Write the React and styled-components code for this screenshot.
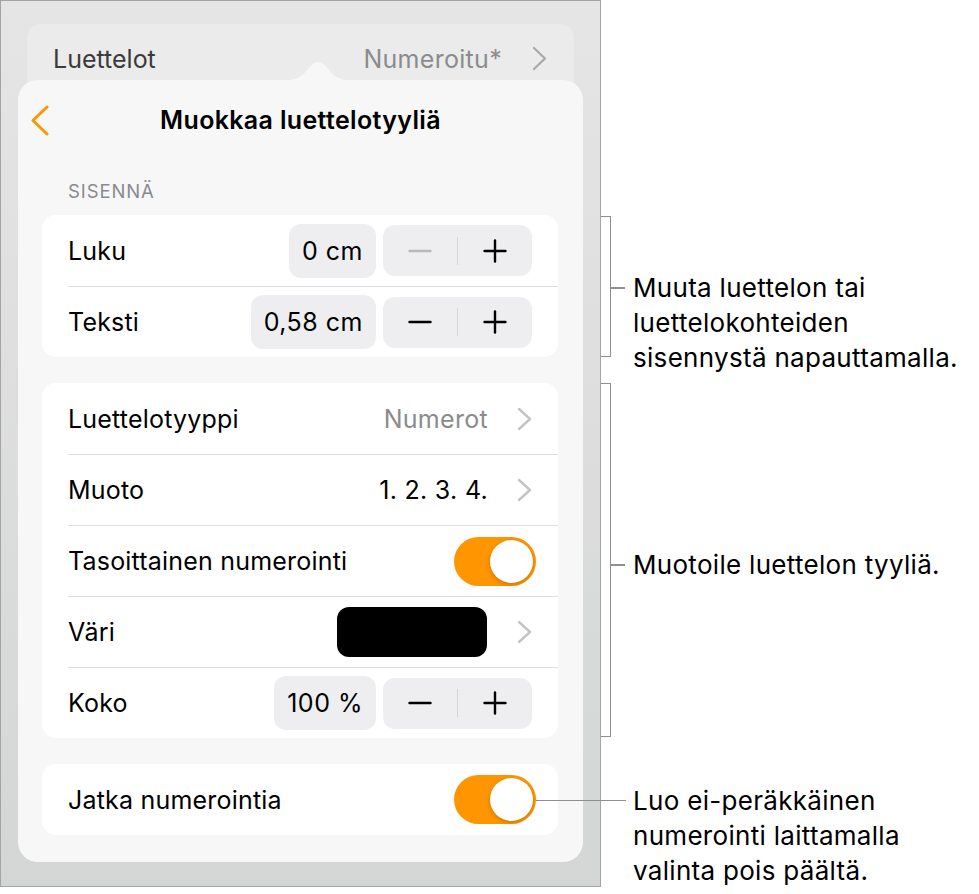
import React from "react";
import styled, { createGlobalStyle } from "styled-components";

const Global = createGlobalStyle`
  html, body { margin: 0; padding: 0; background: #fff; }
  body { font-family: Inter, "Noto Sans", sans-serif; color: #000; }
`;

const Page = styled.div`
  display: flex;
  align-items: flex-start;
  width: 979px;
  height: 894px;
`;

const Frame = styled.div`
  width: 601px;
  height: 887px;
  box-sizing: border-box;
  border: 1px solid #a4a4a4;
  background: linear-gradient(#e4e5e4, #d4d6d5);
  padding: 23px 17px 24px;
  display: flex;
  flex-direction: column;
`;

const TopCard = styled.div`
  margin: 0 9px;
  height: 72px;
  flex-shrink: 0;
  box-sizing: border-box;
  border-radius: 14px;
  background: #eaebea;
  padding: 0 27px 0 26px;
`;

const TopRow = styled.div`
  height: 69px;
  display: flex;
  align-items: center;
  font-size: 25px;
  color: #3a3a3a;
`;

const Spacer = styled.div`
  flex: 1;
`;

const Muted = styled.span`
  color: ${(p) => (p.$dark ? "#000" : "#8b8b8e")};
  font-size: 25px;
  letter-spacing: 0.3px;
  margin-right: ${(p) => p.$gap || 0}px;
`;

const Popover = styled.div`
  position: relative;
  margin-top: -16px;
  flex: 1;
  box-sizing: border-box;
  background: #f7f7f7;
  border-radius: 20px;
  padding: 0 25px 0 24px;
  display: flex;
  flex-direction: column;
`;

const Arrow = styled.svg`
  position: absolute;
  left: 260px;
  top: -21px;
`;

const Header = styled.div`
  margin: 0 -25px 0 -24px;
  height: 80px;
  display: grid;
  grid-template-columns: 1fr auto 1fr;
  align-items: center;
`;

const BackBtn = styled.div`
  padding-left: 13px;
  display: flex;
  align-items: center;
`;

const Title = styled.div`
  font-size: 25px;
  font-weight: 600;
  letter-spacing: 0.35px;
`;

const SectionLabel = styled.div`
  margin: 20px 0 13px 26px;
  line-height: 22px;
  font-size: 18.5px;
  color: #8a8a8e;
  letter-spacing: 0.9px;
`;

const Card = styled.div`
  background: #fff;
  border-radius: 14px;
  margin-bottom: ${(p) => p.$mb || 0}px;
  overflow: hidden;
`;

const Row = styled.div`
  height: 71px;
  box-sizing: border-box;
  margin-left: 26px;
  padding-right: 26px;
  display: flex;
  align-items: center;
  font-size: 25px;
  letter-spacing: 0.2px;
  & + & {
    border-top: 1px solid #dedee0;
  }
`;

const ValueBox = styled.div`
  height: 54px;
  box-sizing: border-box;
  padding: 0 13px;
  border-radius: 12px;
  background: #eeeef0;
  display: flex;
  align-items: center;
  font-size: 25px;
  letter-spacing: 0.5px;
  margin-right: 7px;
`;

const Stepper = styled.div`
  width: 149px;
  height: 51px;
  border-radius: 12px;
  background: #eeeef0;
  display: flex;
  align-items: center;
`;

const StepBtn = styled.div`
  flex: 1;
  display: flex;
  align-items: center;
  justify-content: center;
`;

const StepDivider = styled.div`
  width: 1.5px;
  height: 28px;
  background: #d5d5d7;
`;

const Swatch = styled.div`
  width: 150px;
  height: 50px;
  border-radius: 12px;
  background: #000;
  margin-right: 30px;
`;

const Toggle = styled.div`
  width: 82px;
  height: 49px;
  border-radius: 25px;
  background: #ff9500;
  margin-right: -4px;
  display: flex;
  align-items: center;
  justify-content: flex-end;
  padding: 0 3px;
  box-sizing: border-box;
`;

const Knob = styled.div`
  width: 43px;
  height: 43px;
  border-radius: 50%;
  background: #fff;
  box-shadow: 0 2px 5px rgba(0, 0, 0, 0.18), 0 0 0 0.5px rgba(0, 0, 0, 0.05);
`;

const Notes = styled.div`
  display: flex;
  flex-direction: column;
  padding-top: 216px;
  font-size: 26px;
  line-height: 35px;
  letter-spacing: 0.3px;
`;

const Group = styled.div`
  display: flex;
  align-items: flex-start;
  height: ${(p) => p.$h}px;
  margin-top: ${(p) => p.$mt || 0}px;
`;

const Bracket = styled.div`
  position: relative;
  width: 10px;
  height: 100%;
  box-sizing: border-box;
  border: 1.5px solid #8f8f8f;
  border-left: none;
  &::after {
    content: "";
    position: absolute;
    left: 100%;
    top: ${(p) => p.$tick - 1}px;
    width: 15px;
    height: 1.5px;
    background: #8f8f8f;
  }
`;

const NoteText = styled.div`
  position: relative;
  margin-left: ${(p) => p.$ml}px;
  margin-top: ${(p) => p.$mt}px;
  white-space: nowrap;
  ${(p) =>
    p.$leader &&
    `&::before {
      content: "";
      position: absolute;
      left: -97px;
      top: 17px;
      width: 90px;
      height: 1.5px;
      background: #8f8f8f;
    }`}
`;

const Chevron = ({ color = "#c4c4c7", w = 13, h = 22, sw = 2.4, left = false }) => (
  <svg width={w + 2} height={h + 2} viewBox={`-1 -1 ${w + 2} ${h + 2}`}>
    <polyline
      points={left ? `${w - 1},1 1,${h / 2} ${w - 1},${h - 1}` : `1,1 ${w - 1},${h / 2} 1,${h - 1}`}
      fill="none"
      stroke={color}
      strokeWidth={sw}
      strokeLinecap="round"
      strokeLinejoin="round"
    />
  </svg>
);

const Minus = ({ light }) => (
  <svg width="24" height="24" viewBox="0 0 24 24">
    <line x1="1.5" y1="12" x2="22.5" y2="12" stroke={light ? "#b8b8ba" : "#000"} strokeWidth="2.4" strokeLinecap="round" />
  </svg>
);

const Plus = () => (
  <svg width="24" height="24" viewBox="0 0 24 24">
    <line x1="1.5" y1="12" x2="22.5" y2="12" stroke="#000" strokeWidth="2.4" strokeLinecap="round" />
    <line x1="12" y1="1.5" x2="12" y2="22.5" stroke="#000" strokeWidth="2.4" strokeLinecap="round" />
  </svg>
);

const StepperCtl = ({ lightMinus }) => (
  <Stepper>
    <StepBtn>
      <Minus light={lightMinus} />
    </StepBtn>
    <StepDivider />
    <StepBtn>
      <Plus />
    </StepBtn>
  </Stepper>
);

export default function App() {
  return (
    <>
      <Global />
      <Page>
        <Frame>
          <TopCard>
            <TopRow>
              Luettelot
              <Spacer />
              <Muted $gap={30}>Numeroitu*</Muted>
              <Chevron color="#a9a9a9" w={13} h={23} sw={2.2} />
            </TopRow>
          </TopCard>
          <Popover>
            <Arrow width="80" height="22" viewBox="0 0 80 22">
              <path d="M0 22 C 12 22, 22 21, 30 10 Q 40 -4, 50 10 C 58 21, 68 22, 80 22 Z" fill="#f7f7f7" />
            </Arrow>
            <Header>
              <BackBtn>
                <Chevron color="#ff9500" w={16} h={29} sw={3} left />
              </BackBtn>
              <Title>Muokkaa luettelotyyliä</Title>
              <div />
            </Header>
            <SectionLabel>SISENNÄ</SectionLabel>
            <Card $mb={26}>
              <Row>
                Luku
                <Spacer />
                <ValueBox>0 cm</ValueBox>
                <StepperCtl lightMinus />
              </Row>
              <Row>
                Teksti
                <Spacer />
                <ValueBox>0,58 cm</ValueBox>
                <StepperCtl />
              </Row>
            </Card>
            <Card $mb={26}>
              <Row>
                Luettelotyyppi
                <Spacer />
                <Muted $gap={29}>Numerot</Muted>
                <Chevron />
              </Row>
              <Row>
                Muoto
                <Spacer />
                <Muted $dark $gap={29}>1. 2. 3. 4.</Muted>
                <Chevron />
              </Row>
              <Row>
                Tasoittainen numerointi
                <Spacer />
                <Toggle>
                  <Knob />
                </Toggle>
              </Row>
              <Row>
                Väri
                <Spacer />
                <Swatch />
                <Chevron />
              </Row>
              <Row>
                Koko
                <Spacer />
                <ValueBox>100 %</ValueBox>
                <StepperCtl />
              </Row>
            </Card>
            <Card>
              <Row>
                Jatka numerointia
                <Spacer />
                <Toggle>
                  <Knob />
                </Toggle>
              </Row>
            </Card>
          </Popover>
        </Frame>
        <Notes>
          <Group $h={141}>
            <Bracket $tick={71} />
            <NoteText $ml={22} $mt={53.5}>
              Muuta luettelon tai
              <br />
              luettelokohteiden
              <br />
              sisennystä napauttamalla.
            </NoteText>
          </Group>
          <Group $h={354} $mt={26}>
            <Bracket $tick={181} />
            <NoteText $ml={22} $mt={163.5}>
              Muotoile luettelon tyyliä.
            </NoteText>
          </Group>
          <NoteText $leader $ml={32} $mt={45.5}>
            Luo ei-peräkkäinen
            <br />
            numerointi laittamalla
            <br />
            valinta pois päältä.
          </NoteText>
        </Notes>
      </Page>
    </>
  );
}
